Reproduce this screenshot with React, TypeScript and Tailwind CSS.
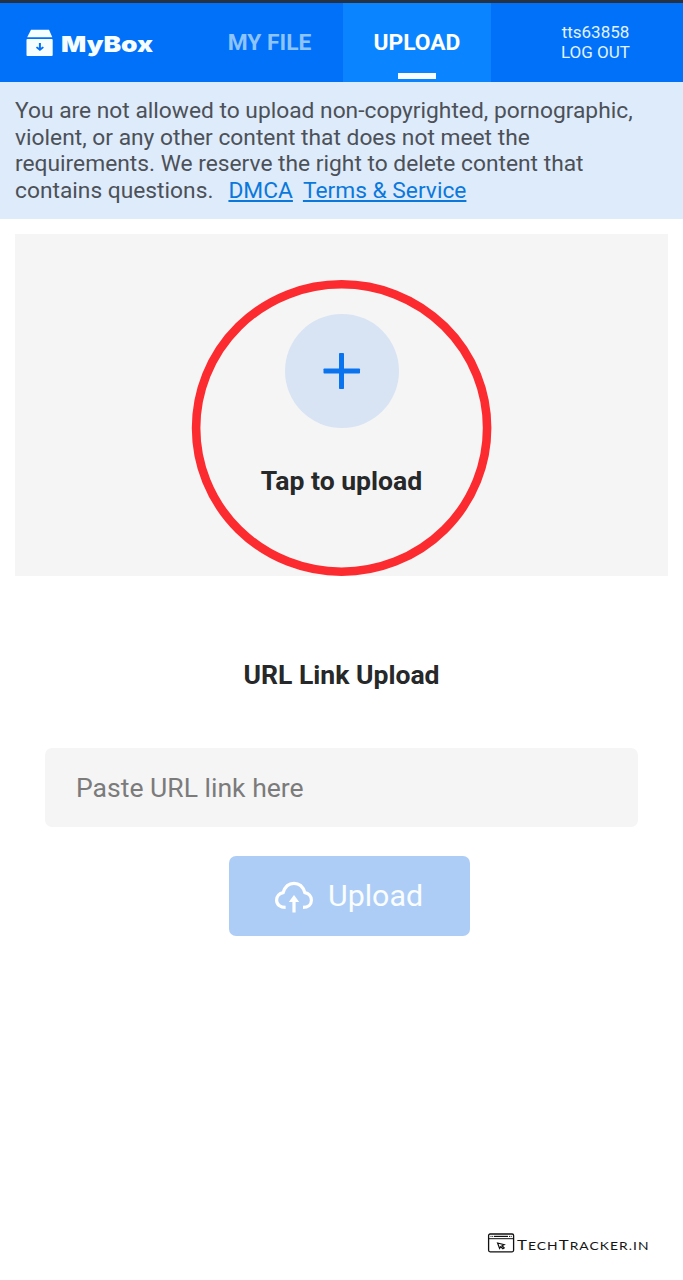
import React from "react";

function BoxIcon() {
  return (
    <svg className="h-[28px] w-[28px] shrink-0" viewBox="0 0 28 28" fill="#f6fdff">
      <path d="M5 .8h18l3.3 7.500H1.200z" />
      <path
        fillRule="evenodd"
        d="M1.400 10h24.400q.9 0 .9.9v15.200q0 .9-.9.9H1.400q-.9 0-.9-.9V10.900q0-.9.9-.9zM12.900 14v4.700l-1.900-1.300-1.100 1.400 4 3.300 4-3.300-1.100-1.400-1.900 1.300V14z"
      />
    </svg>
  );
}

function CloudIcon() {
  return (
    <svg className="mt-[2px] h-[34px] w-[40px] shrink-0" viewBox="0 0 40 34" fill="none" stroke="#fff" strokeWidth="3.2">
      <path d="M11.600 27.400C6.200 27.400 2.600 24.500 2.600 20.200c0-4 2.900-6.900 6.500-7.500C10.800 7.200 14.800 3.400 20 3.400S29.200 7.200 30.900 12.700c3.600.600 6.500 3.500 6.500 7.500 0 4.300-3.400 7.200-8.400 7.200" />
      <path d="M20 32.500V20" />
      <path d="M20 15l5.200 7H14.800z" fill="#fff" stroke="none" />
    </svg>
  );
}

function BrowserIcon() {
  return (
    <svg className="h-[20px] w-[28px] shrink-0" viewBox="0 0 28 20" fill="none" stroke="#111">
      <rect x="1.600" y="1" width="25" height="17.800" rx="1.500" strokeWidth="1.300" />
      <path d="M1.600 5.700h25" strokeWidth="1" />
      <path d="M3.500 3.400h3M22 3.400h3" strokeWidth="1" strokeDasharray="1 .7" />
      <path d="M7 3.400h14" strokeWidth="1.200" />
      <path d="M10.600 10l6.600 1.700-2.200 1.100 2.200 2.100-1.300.900-2.200-2.100-1.100 1.700z" strokeWidth="1.200" />
    </svg>
  );
}

export default function App() {
  return (
    <div className="flex h-[1280px] w-[683px] flex-col overflow-hidden bg-white font-['Roboto',sans-serif]">
      <div className="h-[3px] shrink-0 bg-[#263142]" />
      <header className="flex h-[79px] shrink-0 bg-[#0071f8] text-white">
        <div className="flex w-[196px] items-center pt-[1px] pl-[26px]">
          <BoxIcon />
          <span className="mt-[2px] ml-[7px] origin-left scale-x-[1.200] font-['Inter',sans-serif] text-[22px] font-black text-[#f6fdff]">
            MyBox
          </span>
        </div>
        <nav className="flex text-[22.770px] font-bold">
          <a className="flex w-[147px] items-center justify-center pt-[2px] text-[#8dc4ff]">MY FILE</a>
          <a className="relative flex w-[148px] items-center justify-center bg-[#0a84ff] pt-[2px]">
            UPLOAD
            <span className="absolute bottom-[3px] left-[55px] h-[6px] w-[38px] bg-[#f8fdff]" />
          </a>
        </nav>
        <div className="flex flex-1 flex-col items-center justify-center pb-[2px] pl-[17px] text-[17px] leading-[20px] text-[#e2f3ff]">
          <span>tts63858</span>
          <span>LOG OUT</span>
        </div>
      </header>

      <p className="h-[137px] shrink-0 bg-[#deebfb] pt-[16px] pl-[15px] text-[22.770px] leading-[26.600px] whitespace-nowrap text-[#4c5158]">
        You are not allowed to upload non-copyrighted, pornographic,
        <br />
        violent, or any other content that does not meet the
        <br />
        requirements. We reserve the right to delete content that
        <br />
        contains questions.
        <a className="ml-[15px] text-[#0b78dc] underline">DMCA</a>
        <a className="ml-[10px] text-[#0b78dc] underline">Terms &amp; Service</a>
      </p>

      <section className="relative mx-[15px] mt-[15px] flex h-[342px] shrink-0 flex-col items-center bg-[#f5f5f5] pt-[80px]">
        <div className="flex h-[114px] w-[114px] items-center justify-center rounded-full bg-[#d8e4f4]">
          <svg className="h-[38px] w-[38px]" viewBox="0 0 38 38" fill="#0a73ee">
            <rect x="16" y="1" width="5" height="36" rx=".8" />
            <rect x=".5" y="16.500" width="36.500" height="5" rx=".8" />
          </svg>
        </div>
        <h2 className="mt-[37px] text-[26.560px] leading-[32px] font-bold text-[#262829]">Tap to upload</h2>
        <svg className="absolute top-[45px] left-[176px] h-[298px] w-[302px]" viewBox="0 0 302 298" fill="none">
          <ellipse cx="150.600" cy="149" rx="145.500" ry="143.700" stroke="#fc2b30" strokeWidth="8.600" />
        </svg>
      </section>

      <h2 className="mt-[83px] text-center text-[26.560px] leading-[32px] font-bold text-[#262829]">URL Link Upload</h2>
      <input
        className="mx-[45px] mt-[57px] h-[79px] shrink-0 rounded-[7px] bg-[#f5f5f5] px-[31px] text-[26.560px] text-[#333] outline-none placeholder:text-[#7b7b7b]"
        placeholder="Paste URL link here"
      />
      <button className="mt-[29px] ml-[229px] flex h-[80px] w-[241px] shrink-0 items-center rounded-[7px] bg-[#adcdf6] pl-[45px] text-[30.350px] text-[#fafdff]">
        <CloudIcon />
        <span className="ml-[14px]">Upload</span>
      </button>

      <footer className="mt-auto mb-[26px] ml-[487px] flex h-[22px] items-center text-[#151515]">
        <BrowserIcon />
        <span className="mt-[4px] ml-[2px] origin-left scale-x-[1.200] font-['Lato',sans-serif] text-[14px] leading-[20px] tracking-[0.880px] whitespace-nowrap">
          T<span className="text-[11.500px]">ECH</span>T<span className="text-[11.500px]">RACKER.IN</span>
        </span>
      </footer>
    </div>
  );
}
